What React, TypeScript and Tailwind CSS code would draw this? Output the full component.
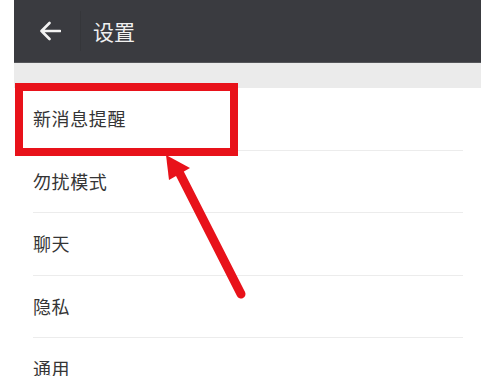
import React from "react";

const items = ["新消息提醒", "勿扰模式", "聊天", "隐私", "通用"];

export default function App() {
  return (
    <div
      className="relative w-[486px] h-[376px] overflow-hidden bg-white"
      style={{ fontFamily: '"Noto Sans CJK SC", "Noto Sans", sans-serif' }}
    >
      <div className="ml-[14px] w-[467px] flex flex-col">
        <div className="h-[63px] bg-[#3a3b40] flex items-center border-b border-[#55565a]">
          <div className="w-[66px] flex justify-center pl-[6px]">
            <svg width="22" height="20" viewBox="0 0 22 20" fill="none">
              <path
                d="M21 10H2.5M10.5 2L2.5 10L10.5 18"
                stroke="#f2f2f2"
                strokeWidth="2.6"
                strokeLinecap="round"
                strokeLinejoin="round"
              />
            </svg>
          </div>
          <div className="w-px h-[40px] bg-[#35363a]" />
          <div className="ml-[12px] text-[21px] text-[#f0f0f0] leading-none">设置</div>
        </div>
        <div className="h-[25px] bg-[#ebebeb]" />
        <div className="flex flex-col">
          {items.map((t) => (
            <div key={t} className="h-[62.5px] pl-[19px] pr-[18px]">
              <div className="h-full flex items-center border-b border-[#ececec] text-[18px] text-[#353535] tracking-[0.6px]">
                {t}
              </div>
            </div>
          ))}
        </div>
      </div>

      <div className="absolute left-[15px] top-[83px] w-[223px] h-[73px] border-[8px] border-[#e8121a]" />

      <svg
        className="absolute left-0 top-0"
        width="486"
        height="376"
        viewBox="0 0 486 376"
      >
        <line x1="178" y1="170" x2="241" y2="294" stroke="#e8121a" strokeWidth="9" strokeLinecap="round" />
        <polygon points="166,155 190,168 169,180" fill="#e8121a" />
      </svg>
    </div>
  );
}
